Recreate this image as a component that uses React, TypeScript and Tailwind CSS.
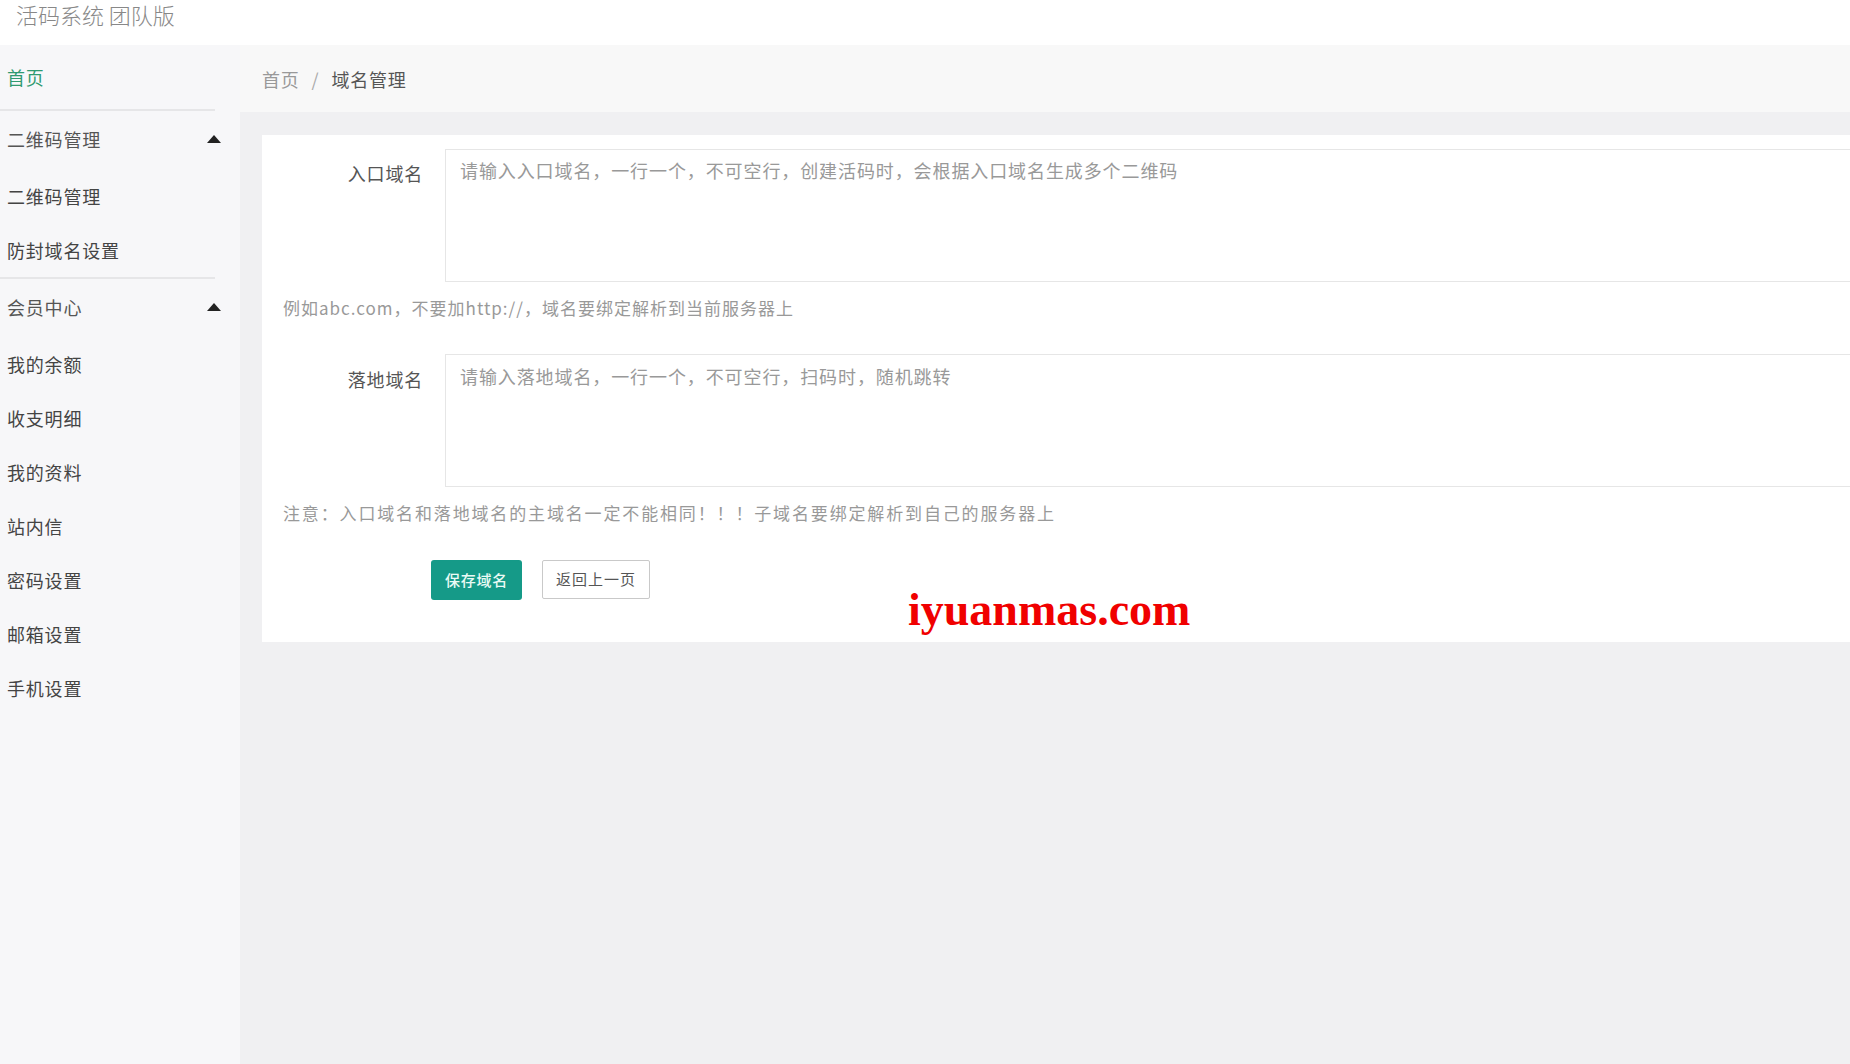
import React from "react";

const font = { fontFamily: '"Noto Sans CJK SC", "Noto Sans", sans-serif' };

function Caret() {
  return (
    <svg width="14" height="8" viewBox="0 0 14 8" className="block">
      <path d="M7 0 L14 8 L0 8 Z" fill="#222" />
    </svg>
  );
}

function SubItem({ text }: { text: string }) {
  return (
    <div className="h-[54px] flex items-center pl-[7px] text-[18px] tracking-[0.8px] text-[#444]">
      {text}
    </div>
  );
}

function GroupHeader({ text }: { text: string }) {
  return (
    <div className="h-[58px] flex items-center justify-between pl-[7px] pr-[19px] pb-[2px] text-[18px] tracking-[0.8px] text-[#555]">
      <span>{text}</span>
      <Caret />
    </div>
  );
}

function Sep() {
  return <div className="h-[2px] w-[215px] bg-[#e6e6e8]" />;
}

export default function App() {
  return (
    <div
      className="relative w-[1850px] h-[1064px] overflow-hidden flex flex-col bg-white"
      style={font}
    >
      <div className="h-[45px] shrink-0 bg-white pl-[16px] pt-[2px]">
        <span className="block text-[22px] leading-[24px] text-[#888] font-light">活码系统 团队版</span>
      </div>
      <div className="flex flex-1 min-h-0">
        <aside className="w-[240px] shrink-0 bg-[#f7f7f9]">
          <div className="h-[64px] flex items-center pl-[7px] text-[18px] tracking-[0.8px] text-[#2f9a70]">
            首页
          </div>
          <Sep />
          <GroupHeader text="二维码管理" />
          <SubItem text="二维码管理" />
          <SubItem text="防封域名设置" />
          <Sep />
          <GroupHeader text="会员中心" />
          <SubItem text="我的余额" />
          <SubItem text="收支明细" />
          <SubItem text="我的资料" />
          <SubItem text="站内信" />
          <SubItem text="密码设置" />
          <SubItem text="邮箱设置" />
          <SubItem text="手机设置" />
        </aside>
        <main className="flex-1 min-w-0 bg-[#f0f0f2] flex flex-col">
          <div className="h-[67px] shrink-0 bg-[#f8f8f8] flex items-center pl-[22px] pt-[2px] text-[18px] tracking-[0.8px]">
            <span className="text-[#999]">首页</span>
            <span className="text-[#aaa] mx-[12px]">/</span>
            <span className="text-[#555]">域名管理</span>
          </div>
          <div className="pt-[23px] pl-[22px]">
            <div className="bg-white pt-[14px] pb-[42px]">
              <div className="flex">
                <div className="w-[161px] shrink-0 text-right pt-[14px] text-[18px] leading-[20px] tracking-[0.8px] text-[#555]">
                  入口域名
                </div>
                <textarea
                  className="ml-[22px] flex-1 h-[133px] resize-none border border-r-0 border-[#e6e6e6] bg-white px-[14px] pt-[10px] text-[18px] leading-[20px] tracking-[0.9px] text-[#555] placeholder:text-[#999] outline-none"
                  style={font}
                  placeholder="请输入入口域名，一行一个，不可空行，创建活码时，会根据入口域名生成多个二维码"
                />
              </div>
              <div className="mt-[16px] pl-[21px] text-[17px] leading-[20px] tracking-[1px] text-[#999]">
                例如abc.com，不要加http://，域名要绑定解析到当前服务器上
              </div>
              <div className="flex mt-[36px]">
                <div className="w-[161px] shrink-0 text-right pt-[15px] text-[18px] leading-[20px] tracking-[0.8px] text-[#555]">
                  落地域名
                </div>
                <textarea
                  className="ml-[22px] flex-1 h-[133px] resize-none border border-r-0 border-[#e6e6e6] bg-white px-[14px] pt-[11px] text-[18px] leading-[20px] tracking-[0.9px] text-[#555] placeholder:text-[#999] outline-none"
                  style={font}
                  placeholder="请输入落地域名，一行一个，不可空行，扫码时，随机跳转"
                />
              </div>
              <div className="mt-[16px] pl-[21px] text-[17px] leading-[20px] tracking-[1.85px] text-[#999]">
                注意：入口域名和落地域名的主域名一定不能相同！！！子域名要绑定解析到自己的服务器上
              </div>
              <div className="mt-[37px] pl-[169px] flex gap-[20px]">
                <button
                  className="h-[40px] w-[91px] rounded-[3px] bg-[#159a88] text-[15px] font-medium tracking-[0.8px] text-[#eafaf5]"
                  style={font}
                >
                  保存域名
                </button>
                <button
                  className="h-[39px] w-[108px] rounded-[2px] border border-[#c9c9c9] bg-white text-[15px] tracking-[1px] text-[#555]"
                  style={font}
                >
                  返回上一页
                </button>
              </div>
            </div>
          </div>
        </main>
      </div>
      <div
        className="absolute left-[908px] top-[582px] text-[46px] leading-[56px] font-bold text-[#f00000]"
        style={{ fontFamily: '"Liberation Serif", serif' }}
      >
        iyuanmas.com
      </div>
    </div>
  );
}
